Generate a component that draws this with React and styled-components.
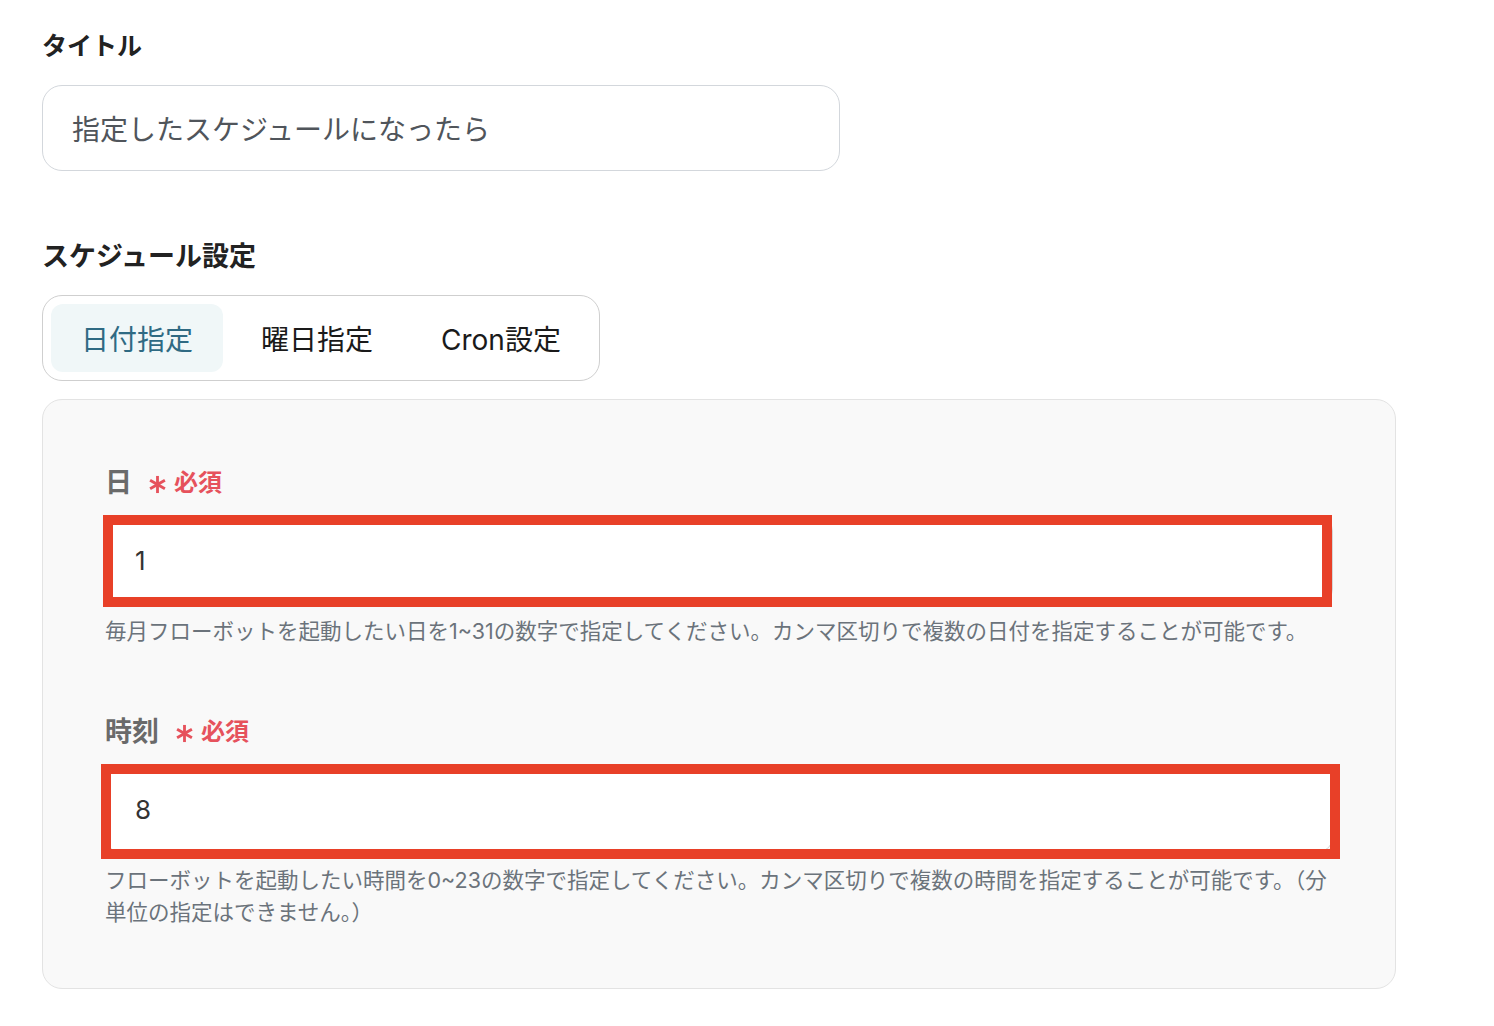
import React from 'react'
import styled, { createGlobalStyle } from 'styled-components'

const GlobalStyle = createGlobalStyle`
	body {
		margin: 0;
		background: #ffffff;
		font-family: Inter, "Noto Sans CJK JP", sans-serif;
		color: #222;
	}
`

const Page = styled.div`
	padding: 28px 0 40px 42px;
	width: 1354px;
`

const Heading = styled.h2`
	margin: ${props => props.top || 0}px 0 0;
	font-size: ${props => props.size || 26}px;
	line-height: 36px;
	font-weight: 700;
	color: #222;
`

const TitleBox = styled.div`
	margin-top: 21px;
	width: 798px;
	height: 86px;
	box-sizing: border-box;
	border: 1.5px solid #d3d7dc;
	border-radius: 20px;
	display: flex;
	align-items: center;
	padding-left: 29px;
	font-size: 28px;
	color: #50555b;
`

const TabGroup = styled.div`
	margin-top: 20px;
	display: inline-flex;
	gap: 8px;
	padding: 8px;
	border: 1.5px solid #cfcfcf;
	border-radius: 20px;
	box-sizing: border-box;
	height: 86px;
`

const Tab = styled.div`
	display: flex;
	align-items: center;
	padding: 0 30px;
	border-radius: 12px;
	font-size: 28px;
	background: ${props => (props.active ? '#f0f7f8' : 'transparent')};
	color: ${props => (props.active ? '#2f6a83' : '#1a1a1a')};
`

const Panel = styled.div`
	margin-top: 18px;
	width: 1354px;
	box-sizing: border-box;
	background: #f9f9f9;
	border: 1.5px solid #e3e3e3;
	border-radius: 20px;
	padding: 62px 62px 60px 62px;
`

const Field = styled.div`
	margin-top: ${props => props.top || 0}px;
`

const Label = styled.div`
	display: flex;
	align-items: center;
	height: 36px;
	font-size: 27px;
	font-weight: 700;
	color: #6a6a6a;
`

const Required = styled.span`
	margin-left: 16px;
	display: flex;
	align-items: center;
	gap: 7px;
	font-size: 24px;
	color: #e6525c;
	font-weight: 700;
`

const StarIcon = styled.svg`
	width: 19px;
	height: 19px;
	position: relative;
	top: 4px;
`

const InputWrap = styled.div`
	position: relative;
	margin-top: 19px;
`

const Input = styled.div`
	height: 86px;
	box-sizing: border-box;
	background: #fff;
	border: 1.5px solid #d6d6d6;
	border-radius: 14px;
	display: flex;
	align-items: center;
	padding-left: 29px;
	font-size: 26px;
	color: #333;
`

const Highlight = styled.div`
	position: absolute;
	top: ${props => props.t}px;
	left: ${props => props.l}px;
	right: ${props => props.r}px;
	bottom: ${props => props.b}px;
	border: 10px solid #e84028;
	pointer-events: none;
`

const Help = styled.p`
	margin: 12px 0 0;
	font-size: 21.5px;
	line-height: 32px;
	color: #6b737b;
`

const Star = () => (
	<StarIcon viewBox="0 0 20 20">
		<g stroke="#e6525c" strokeWidth="3" strokeLinecap="butt">
			<line x1="10" y1="1" x2="10" y2="19" />
			<line x1="2.2" y1="5.5" x2="17.8" y2="14.5" />
			<line x1="2.2" y1="14.5" x2="17.8" y2="5.5" />
		</g>
	</StarIcon>
)

const fields = [
	{
		label: '日',
		value: '1',
		help: ['毎月フローボットを起動したい日を1~31の数字で指定してください。カンマ区切りで複数の日付を指定することが可能です。'],
		box: { t: -2, l: -2, r: 1, b: -4 }
	},
	{
		label: '時刻',
		value: '8',
		help: [
			'フローボットを起動したい時間を0~23の数字で指定してください。カンマ区切りで複数の時間を指定することが可能です。（分',
			'単位の指定はできません。）'
		],
		box: { t: -2, l: -4, r: -7, b: -7 }
	}
]

export default function App() {
	return (
		<Page>
			<GlobalStyle />
			<Heading size={25}>タイトル</Heading>
			<TitleBox>指定したスケジュールになったら</TitleBox>

			<Heading top={68} size={27}>スケジュール設定</Heading>
			<div>
				<TabGroup>
					<Tab active>日付指定</Tab>
					<Tab>曜日指定</Tab>
					<Tab>Cron設定</Tab>
				</TabGroup>
			</div>

			<Panel>
				{fields.map((f, i) => (
					<Field key={f.label} top={i === 0 ? 0 : 64}>
						<Label>
							{f.label}
							<Required>
								<Star />必須
							</Required>
						</Label>
						<InputWrap>
							<Input>{f.value}</Input>
							<Highlight {...f.box} />
						</InputWrap>
						<Help>
							{f.help.map((line, j) => (
								<React.Fragment key={j}>
									{j > 0 && <br />}
									{line}
								</React.Fragment>
							))}
						</Help>
					</Field>
				))}
			</Panel>
		</Page>
	)
}
